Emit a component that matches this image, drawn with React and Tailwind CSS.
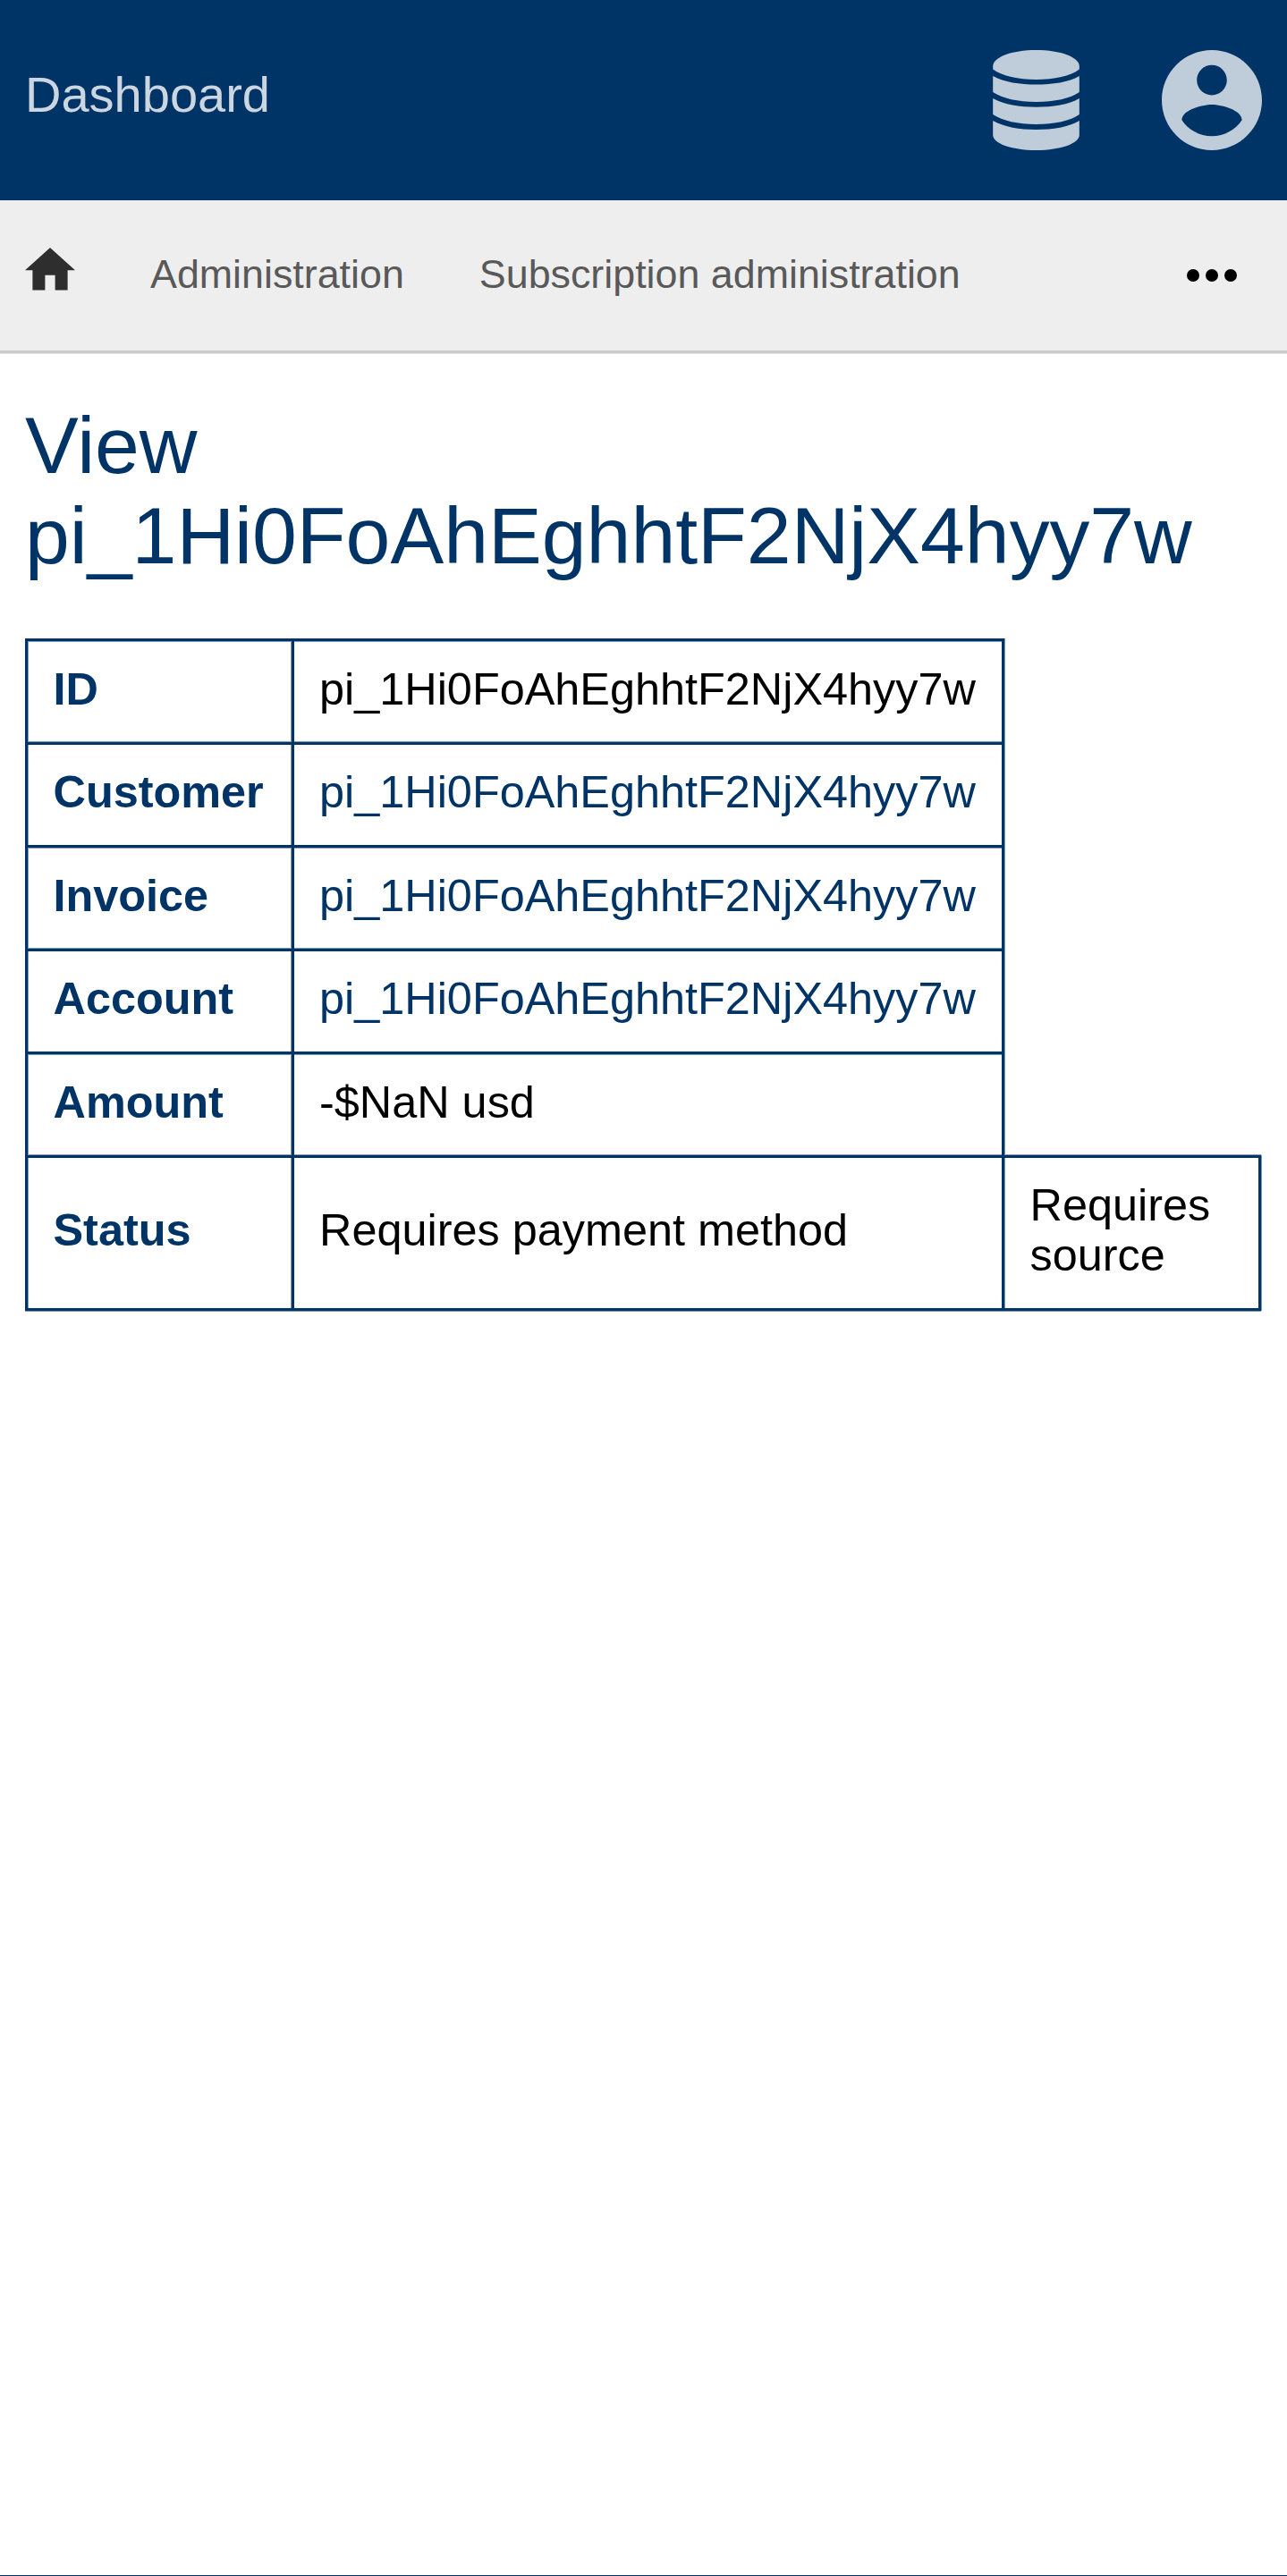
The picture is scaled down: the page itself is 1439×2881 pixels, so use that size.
import React from "react";
import clsx from "clsx";

const ROWS = [
  { label: "ID", value: "pi_1Hi0FoAhEghhtF2NjX4hyy7w", height: "h-[116px]" },
  { label: "Customer", value: "pi_1Hi0FoAhEghhtF2NjX4hyy7w", link: true, height: "h-[115px]" },
  { label: "Invoice", value: "pi_1Hi0FoAhEghhtF2NjX4hyy7w", link: true, height: "h-[116px]" },
  { label: "Account", value: "pi_1Hi0FoAhEghhtF2NjX4hyy7w", link: true, height: "h-[115px]" },
  { label: "Amount", value: "-$NaN usd", height: "h-[116px]" },
];

function DatabaseIcon() {
  return (
    <svg className="h-28 w-[98px]" viewBox="0 0 98 112" fill="currentColor" aria-hidden="true">
      <path d="M0.200 18C0.200 8 21 0 48.500 0S96.800 8 96.800 18V21.500C87 29 69 33 48.500 33S11 29 0.200 21.500Z" />
      <path d="M0.200 29C13 36 30 38.500 48.500 38.500S85 36 96.800 29V47C87 54 69 58 48.500 58S11 54 0.200 47Z" />
      <path d="M0.200 54C13 61 30 63.700 48.500 63.700S85 61 96.800 54V72C87 79 69 83 48.500 83S11 79 0.200 72Z" />
      <path d="M0.200 79C13 86 30 89 48.500 89S85 86 96.800 79V95C96.800 104 77 112 48.500 112S0.200 104 0.200 95Z" />
    </svg>
  );
}

function AccountIcon() {
  return (
    <svg className="size-28" viewBox="2 2 20 20" fill="currentColor" aria-hidden="true">
      <path d="M12 2C6.480 2 2 6.480 2 12s4.480 10 10 10 10-4.480 10-10S17.520 2 12 2zm0 3c1.660 0 3 1.340 3 3s-1.340 3-3 3-3-1.340-3-3 1.340-3 3-3zm0 14.200c-2.500 0-4.710-1.280-6-3.220.03-1.990 4-3.080 6-3.080 1.990 0 5.970 1.090 6 3.080-1.290 1.940-3.500 3.220-6 3.220z" />
    </svg>
  );
}

function HomeIcon() {
  return (
    <svg className="h-[47.6px] w-14 text-[#2e2e2e]" viewBox="2 3 20 17" fill="currentColor" aria-hidden="true">
      <path d="M10 20v-6h4v6h5v-8h3L12 3 2 12h3v8z" />
    </svg>
  );
}

function MoreIcon() {
  return (
    <svg className="h-3.5 w-14" viewBox="0 0 56 14" fill="currentColor" aria-hidden="true">
      <circle cx="7" cy="7" r="7" />
      <circle cx="28" cy="7" r="7" />
      <circle cx="49" cy="7" r="7" />
    </svg>
  );
}

function Row({ label, value, link, height, even }) {
  return (
    <tr className={height}>
      <th
        className={clsx(
          "border-t-3 border-l-3 border-[#003366] pl-[28.5px] text-left align-middle font-bold text-[#003366]",
          even
            ? "pb-[7px] shadow-[inset_1px_0_#7f99b2,inset_-1px_0_#7f99b2]"
            : "pb-1.5 shadow-[inset_0_0_0_1px_#7f99b2]"
        )}
      >
        {label}
      </th>
      <td
        className={clsx(
          "border-x-3 border-t-3 border-[#003366] pl-7 align-middle",
          link ? "text-[#003366]" : "text-black",
          even
            ? "pb-[7px] shadow-[1px_0_#7f99b2]"
            : "pb-1.5 shadow-[1px_0_#7f99b2,inset_0_1px_#7f99b2,inset_0_-1px_#7f99b2]"
        )}
      >
        {link ? <a href="#">{value}</a> : value}
      </td>
      <td />
    </tr>
  );
}

export default function App() {
  return (
    <div className="flex h-[2881px] w-[1439px] flex-col overflow-hidden border-b border-[#003366] bg-white font-['Liberation_Sans',Arial,sans-serif]">
      <header className="flex h-56 shrink-0 items-center justify-between bg-[#003366] px-7 text-[#bfccd9]">
        <a href="#" className="pb-3 text-[56px] leading-[64px] text-[#ccd6e0]">Dashboard</a>
        <div className="flex items-center gap-[91px]">
          <DatabaseIcon />
          <AccountIcon />
        </div>
      </header>

      <nav className="flex h-[171px] shrink-0 items-center border-b-3 border-[#cccccc] bg-[#eeeeee] px-7 text-[44.8px] leading-[52px] text-[#595959] shadow-[0_1px_#e5e5e5]">
        <a href="#" aria-label="Home" className="pb-3.5">
          <HomeIcon />
        </a>
        <a href="#" className="ml-[84px] pb-1">Administration</a>
        <a href="#" className="ml-[84px] pb-1">Subscription administration</a>
        <button type="button" aria-label="More" className="mr-7 ml-auto text-black">
          <MoreIcon />
        </button>
      </nav>

      <main className="px-7 pt-[53px]">
        <h1 className="text-[89.6px] leading-[101px] text-[#003366]">
          View pi_1Hi0FoAhEghhtF2NjX4hyy7w
        </h1>

        <table className="mt-16 w-[1382px] table-fixed border-separate border-spacing-0 text-[50.4px] leading-[56px] text-black">
          <colgroup>
            <col className="w-[298px]" />
            <col className="w-[797px]" />
            <col className="w-[287px]" />
          </colgroup>
          <tbody>
            {ROWS.map((row, i) => (
              <Row key={row.label} {...row} even={i % 2 === 1} />
            ))}
            <tr className="h-[174px]">
              <th className="border-y-3 border-l-3 border-[#003366] pb-[7px] pl-[28.5px] text-left align-middle font-bold text-[#003366] shadow-[0_1px_#7f99b2,inset_1px_0_#7f99b2,inset_-1px_0_#7f99b2]">
                Status
              </th>
              <td className="border-3 border-[#003366] pb-[7px] pl-7 align-middle shadow-[0_1px_#7f99b2]">
                Requires payment method
              </td>
              <td className="border-y-3 border-r-3 border-[#003366] pb-[7px] pl-[28.5px] align-middle shadow-[1px_0_#7f99b2,0_1px_#7f99b2,0_-1px_#7f99b2,inset_1px_0_#7f99b2]">
                Requires source
              </td>
            </tr>
          </tbody>
        </table>
      </main>
    </div>
  );
}
